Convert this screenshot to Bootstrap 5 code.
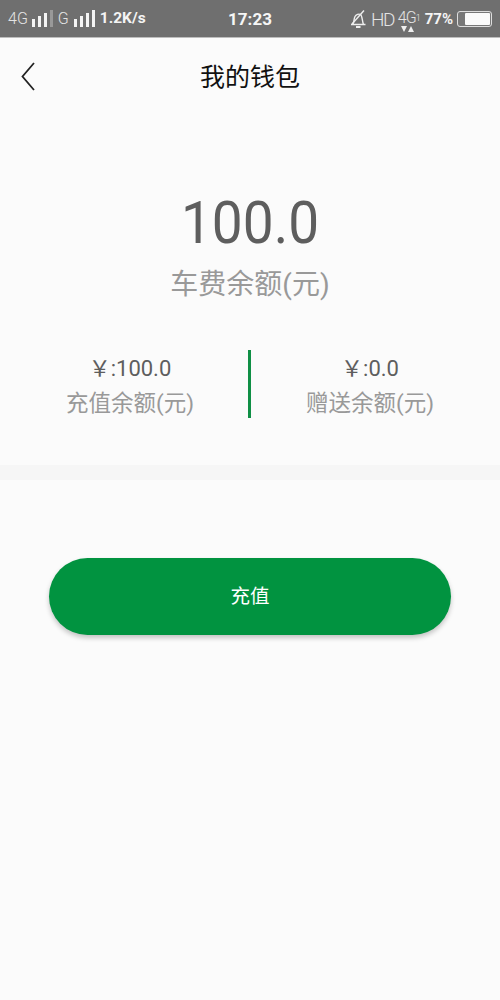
<!DOCTYPE html>
<html lang="zh">
<head>
<meta charset="utf-8">
<link rel="stylesheet" href="https://cdn.jsdelivr.net/npm/bootstrap@5.3.0/dist/css/bootstrap.min.css">
<style>
html,body{background:#fbfbfb;}
body{font-family:Roboto,"Noto Sans CJK SC",sans-serif;height:1000px;overflow:hidden;}
.sbar{height:38px;background:#6f6f6f;color:#f4f4f4;border-bottom:1px solid #bdbdbd;padding:1px 8px 0 8px;font-size:14px;line-height:1;}
.sleft,.sright{flex:1 1 0;}
.sig{display:inline-flex;align-items:flex-end;gap:3px;height:17px;margin-top:-2px;}
.sig i{display:block;width:3px;background:#f4f4f4;}
.thin{font-weight:300;color:#e4e4e4;font-size:16px;}
.gsp{margin-left:5px;}
.strong{font-weight:700;font-size:15.500px;}
.clock{font-weight:700;font-size:17px;color:#f6f6f6;}
.batt{width:35px;height:16px;border:1px solid #ddd;border-radius:3px;padding:1px;display:flex;justify-content:flex-end;background:#777;}
.batt span{display:block;width:25px;background:#fafafa;border-radius:1px;}
.net4g{display:inline-flex;flex-direction:column;align-items:center;gap:0;margin-top:3px;}
.hbar{height:78px;}
.backbtn{left:21px;top:23px;line-height:0;}
.ttl{font-size:25px;color:#111;line-height:1;margin:0;font-weight:400;}
.sumv{font-size:55px;line-height:1;color:#5e5e5e;margin-top:80px;transform:scaleY(1.08);}
.sumt{font-size:28px;line-height:1;color:#999;margin-top:20px;}
.pair{margin-top:51px;height:68px;padding:0 10px;}
.pairc{flex:1 1 0;}
.amt{font-size:22px;line-height:1;color:#5e5e5e;padding-top:8px;}
.lab{font-size:22.500px;line-height:1;color:#999;margin-top:12px;}
.vsep{width:3px;height:68px;background:#0f8f45;margin-right:-1px;margin-left:-2px;}
.band{height:15px;background:#f6f6f6;margin-top:47px;}
.chg{display:block;width:402px;height:77px;margin:78px auto 0;border:0;border-radius:39px;background:#019340;color:#fff;font-size:19.500px;box-shadow:0 3px 5px rgba(0,0,0,.22);}
</style>
</head>
<body class="m-0">
<div class="sbar d-flex align-items-center">
  <div class="sleft d-flex align-items-center">
    <span class="thin">4G</span>
    <span class="sig ms-1"><i style="height:8px"></i><i style="height:11px"></i><i style="height:14px"></i><i style="height:17px;background:#999"></i></span>
    <span class="thin gsp">G</span>
    <span class="sig gsp"><i style="height:8px"></i><i style="height:11px"></i><i style="height:14px"></i><i style="height:17px"></i></span>
    <span class="strong gsp">1.2K/s</span>
  </div>
  <div class="clock">17:23</div>
  <div class="sright d-flex align-items-center justify-content-end">
    <svg width="17" height="20" viewBox="0 0 17 20" fill="none" stroke="#eee" stroke-width="1.400"><path d="M1 15.500h14.500M2.500 15.500c2-2 1-5 2.500-8 1-2 4-3 5.500-2 2 1.500 1.500 6.500 3 10"/><path d="M6 18h4.500" stroke-width="2"/><path d="M2 15 14 1.500"/></svg>
    <span class="thin ms-1" style="font-size:19px;letter-spacing:-1.500px">HD</span>
    <span class="net4g ms-1"><span class="thin" style="font-size:16px;letter-spacing:-1px">4G</span><svg width="14" height="6" viewBox="0 0 14 6" fill="#eee"><path d="M1 0h6L4 6zM8 6h6l-3-6z"/></svg></span>
    <span class="thin" style="font-size:9px;margin-top:-2px">1</span>
    <span class="strong ms-1" style="font-size:15px">77%</span>
    <span class="batt ms-1"><span></span></span>
  </div>
</div>
<div class="hbar position-relative d-flex align-items-center justify-content-center">
  <span class="backbtn position-absolute"><svg width="16" height="32" viewBox="0 0 16 32" fill="none" stroke="#222" stroke-width="1.800"><path d="M13 2 1.500 15.500 13 29"/></svg></span>
  <h1 class="ttl">我的钱包</h1>
</div>
<div class="text-center">
  <div class="sumv">100.0</div>
  <div class="sumt">车费余额(元)</div>
</div>
<div class="pair d-flex text-center">
  <div class="pairc"><div class="amt">￥:100.0</div><div class="lab">充值余额(元)</div></div>
  <div class="vsep"></div>
  <div class="pairc"><div class="amt">￥:0.0</div><div class="lab">赠送余额(元)</div></div>
</div>
<div class="band"></div>
<button class="btn chg" type="button">充值</button>
<script src="https://cdn.jsdelivr.net/npm/bootstrap@5.3.0/dist/js/bootstrap.bundle.min.js"></script>
</body>
</html>
